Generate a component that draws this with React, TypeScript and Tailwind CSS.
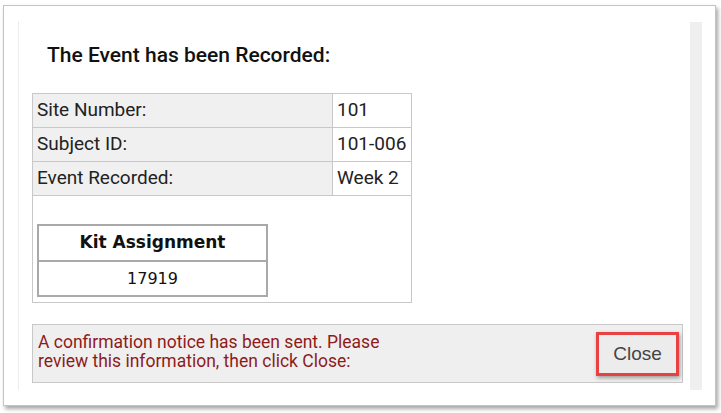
const rows = [
  { label: 'Site Number:', value: '101' },
  { label: 'Subject ID:', value: '101-006' },
  { label: 'Event Recorded:', value: 'Week 2' },
];

function KitTable() {
  return (
    <table className="w-[231px] border-collapse border-2 border-[#a9a9a9] font-['DejaVu_Sans',sans-serif] text-[#111]">
      <tbody>
        <tr className="h-[36px]">
          <th className="border-2 border-[#a9a9a9] text-center text-[17px] font-bold">Kit Assignment</th>
        </tr>
        <tr className="h-[35px]">
          <td className="border-2 border-[#a9a9a9] text-center text-[16px]">17919</td>
        </tr>
      </tbody>
    </table>
  );
}

export default function App() {
  return (
    <div className="h-[413px] w-[721px] overflow-hidden bg-white font-['Roboto',sans-serif]">
      <div className="ml-[3px] mt-[5px] h-[401px] w-[713px] border border-[#c4c4c4] bg-white pl-[14px] pt-[15px] shadow-[2px_3px_4px_rgba(0,0,0,0.35)]">
        <div className="flex h-[369px]">
          <div className="w-[672px] border-l border-[#ececec] pl-[13px] pt-[22px]">
            <h2 className="ml-[15px] text-[21px] leading-[24px] font-medium text-[#111]">The Event has been Recorded:</h2>

            <table className="mt-[26px] w-[380px] border-collapse border border-[#c8c8c8] text-[19px] text-[#222]">
              <tbody>
                {rows.map((row) => (
                  <tr key={row.label} className="h-[34px]">
                    <td className="w-[300px] border border-[#c8c8c8] bg-[#f0f0f0] pl-[4px]">{row.label}</td>
                    <td className="border border-[#c8c8c8] bg-white pl-[4px]">{row.value}</td>
                  </tr>
                ))}
                <tr>
                  <td colSpan={2} className="h-[105px] border border-[#c8c8c8] pl-[4px] pt-[28px] pb-[5px] align-top">
                    <KitTable />
                  </td>
                </tr>
              </tbody>
            </table>

            <div className="mt-[21px] flex h-[59px] w-[651px] items-start justify-between border border-[#c8c8c8] bg-[#efefef] pl-[5px] pr-[3px]">
              <p className="pt-[8px] text-[17.5px] leading-[19px] text-[#8e1b1b]">
                A confirmation notice has been sent. Please
                <br />
                review this information, then click Close:
              </p>
              <button className="mt-[7px] h-[44px] w-[83px] border-[3px] border-[#e84141] bg-[#ececec] font-['Liberation_Sans',sans-serif] text-[19px] text-[#444] shadow-[1px_2px_4px_rgba(0,0,0,0.35)]">
                Close
              </button>
            </div>
          </div>
          <div className="mt-[1px] w-[12px] bg-[#efefef]" />
        </div>
      </div>
    </div>
  );
}
